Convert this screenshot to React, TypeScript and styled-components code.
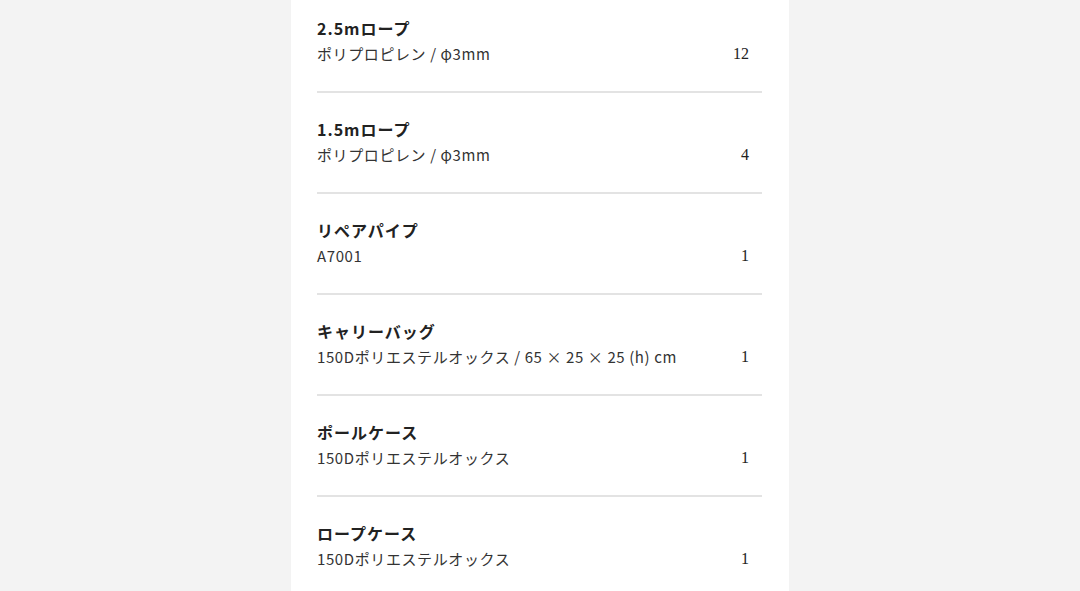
import React from "react";
import styled, { createGlobalStyle } from "styled-components";

const Global = createGlobalStyle`
  html, body { margin: 0; padding: 0; background: #f3f3f3; }
  body { font-family: "Noto Sans CJK JP", "Noto Sans", sans-serif; }
`;

const Page = styled.div`
  display: flex;
  justify-content: center;
  width: 1080px;
  height: 591px;
  overflow: hidden;
`;

const Panel = styled.div`
  width: 498px;
  background: #ffffff;
  padding: 0 27px 0 26px;
  box-sizing: border-box;
  margin-top: -8px;
`;

const Row = styled.div`
  display: grid;
  grid-template-columns: 1fr auto;
  grid-template-rows: 24px 28px;
  padding: 24px 13px 23px 0;
  border-bottom: 2px solid #e3e3e3;
`;

const Title = styled.div`
  grid-column: 1 / 3;
  font-size: 16px;
  font-weight: 700;
  line-height: 24px;
  letter-spacing: 1px;
  color: #222222;
`;

const Spec = styled.div`
  font-size: 15px;
  line-height: 28px;
  letter-spacing: 0.6px;
  color: #333333;
`;

const Qty = styled.div`
  font-family: "Liberation Serif", "DejaVu Serif", serif;
  font-size: 16px;
  line-height: 28px;
  color: #222222;
  text-align: right;
`;

const items = [
  { name: "2.5mロープ", spec: "ポリプロピレン / φ3mm", qty: 12 },
  { name: "1.5mロープ", spec: "ポリプロピレン / φ3mm", qty: 4 },
  { name: "リペアパイプ", spec: "A7001", qty: 1 },
  { name: "キャリーバッグ", spec: "150Dポリエステルオックス / 65 × 25 × 25 (h) cm", qty: 1 },
  { name: "ポールケース", spec: "150Dポリエステルオックス", qty: 1 },
  { name: "ロープケース", spec: "150Dポリエステルオックス", qty: 1 },
];

export default function App() {
  return (
    <>
      <Global />
      <Page>
        <Panel>
          {items.map((it) => (
            <Row key={it.name}>
              <Title>{it.name}</Title>
              <Spec>{it.spec}</Spec>
              <Qty>{it.qty}</Qty>
            </Row>
          ))}
        </Panel>
      </Page>
    </>
  );
}
